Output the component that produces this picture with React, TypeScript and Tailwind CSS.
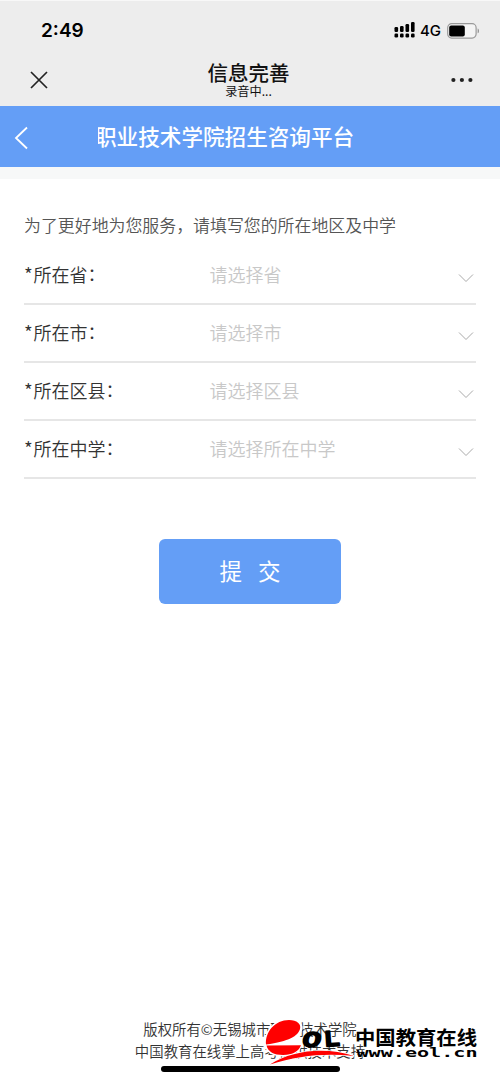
const fields = [
  { label: '所在省', placeholder: '请选择省' },
  { label: '所在市', placeholder: '请选择市' },
  { label: '所在区县', placeholder: '请选择区县' },
  { label: '所在中学', placeholder: '请选择所在中学' },
];

function StatusBar() {
  return (
    <div className="h-[60px] pl-[41px] pr-[20px] flex items-center justify-between">
      <span className="font-['Inter'] font-semibold text-[19px] leading-6 text-black">2:49</span>
      <div className="flex items-center">
        <svg className="-mt-[2px]" width="22" height="18" viewBox="0 0 22 18" fill="black">
          <rect x="0.5" y="6" width="3.6" height="5" rx="1.2" />
          <rect x="6" y="5" width="3.6" height="6" rx="1.2" />
          <rect x="11.5" y="3" width="3.6" height="8" rx="1.2" />
          <rect x="17" y="1" width="3.6" height="10" rx="1.2" />
          <rect x="0.5" y="12.600" width="3.6" height="3.8" rx="1.2" />
          <rect x="6" y="12.600" width="3.6" height="3.8" rx="1.2" />
          <rect x="11.5" y="12.600" width="3.6" height="3.8" rx="1.2" />
          <rect x="17" y="12.600" width="3.6" height="3.8" rx="1.2" />
        </svg>
        <span className="ml-[4px] w-[23px] font-['Inter'] font-medium text-[15px] leading-5 text-black">4G</span>
        <svg className="ml-[4px] -mt-[1px]" width="33" height="16" viewBox="0 0 33 16">
          <rect x="0.7" y="0.7" width="28.4" height="14.4" rx="4" fill="#f4f4f4" stroke="#999" strokeWidth="1.2" />
          <rect x="2.2" y="2.4" width="15.6" height="11" rx="2" fill="black" />
          <path d="M30.7 5.5c1.6.6 1.6 4.2 0 4.8z" fill="#888" />
        </svg>
      </div>
    </div>
  );
}

function WechatBar() {
  return (
    <div className="h-[46px] px-[29px] grid grid-cols-[40px_1fr_40px]">
      <svg className="mt-[10px] ml-[1px]" width="18" height="18" viewBox="0 0 18 18" fill="none" stroke="#222" strokeWidth="1.7">
        <path d="M1 1 17 17M17 1 1 17" />
      </svg>
      <div className="-ml-[3px] text-center text-[#111]">
        <h1 className="-mt-[1px] text-[20.5px] leading-[24px] font-medium">信息完善</h1>
        <p className="text-[12.200px] leading-[15px]">录音中...</p>
      </div>
      <svg className="mt-[16px] justify-self-end mr-[-2px]" width="22" height="6" viewBox="0 0 22 6" fill="#222">
        <circle cx="2.4" cy="3" r="2.1" />
        <circle cx="10.9" cy="3" r="2.1" />
        <circle cx="19.4" cy="3" r="2.1" />
      </svg>
    </div>
  );
}

function EolLogo() {
  return (
    <div className="absolute left-[262px] top-[1016px] flex">
      <svg width="94" height="52" viewBox="0 0 94 52">
        {/* red "e" emblem with its white halo */}
        <path d="M4 28C3 16 13 4 27 4c8 0 13 4 12 9-1 5-4 8-7 11l7 5c-3 6-9 10-17 10C12 39 5 36 4 28z" fill="white" stroke="white" strokeWidth="3" />
        <path d="M4 28.500C3 16 13 4 27 4c8 0 12.500 4 11 9C36 20 27 25.500 4 28.500z" fill="#f00" />
        <path d="M4.500 29.500 39 29.300C37 35 31 39 21 39 12 39 6 36 4.500 29.500z" fill="#f00" />
        <path d="M8 48.500C31 33.500 65 31 92 40 63 37 36 39.500 8 48.500z" fill="#f00" stroke="white" strokeWidth="1.500" paintOrder="stroke" />
        <text x="40.500" y="30.500" fontFamily="Liberation Sans" fontWeight="700" fontStyle="italic" fontSize="27" textLength="19" lengthAdjust="spacingAndGlyphs" stroke="black" strokeWidth="1.500" strokeLinejoin="round">o</text>
        <text x="63.500" y="30.500" fontFamily="Liberation Sans" fontWeight="700" fontSize="22" textLength="14.500" lengthAdjust="spacingAndGlyphs" stroke="black" strokeWidth="1.800" strokeLinejoin="round" transform="rotate(-4 63.500 30.500)">L</text>
      </svg>
      <svg width="124" height="48" viewBox="0 0 124 48" fill="black">
        <text x="0.500" y="41.300" fontFamily="DejaVu Sans Mono" fontWeight="700" fontSize="12" textLength="121" lengthAdjust="spacingAndGlyphs">www.eol.cn</text>
        <text x="-1" y="28.500" fontFamily="Noto Sans CJK SC" fontWeight="700" fontSize="19.500" textLength="122" lengthAdjust="spacingAndGlyphs" stroke="white" strokeWidth="1" paintOrder="stroke">中国教育在线</text>
      </svg>
    </div>
  );
}

export default function App() {
  return (
    <div className="relative h-[1082px] w-[500px] overflow-hidden bg-white flex flex-col font-['Noto_Sans_CJK_SC',sans-serif]">
      <header className="h-[106px] shrink-0 bg-[#ededed] border-t border-[#f8f8f8]">
        <StatusBar />
        <WechatBar />
      </header>

      <nav className="h-[61px] shrink-0 bg-[#649ef6] flex items-center">
        <svg className="ml-[14px] mt-[2px]" width="15" height="24" viewBox="0 0 15 24" fill="none" stroke="white" strokeWidth="1.8">
          <path d="M13 1.500 2 12l11 10.500" />
        </svg>
        <div className="ml-[69px] -mt-[2px] w-[280px] overflow-hidden">
          <h2 className="-ml-[3px] whitespace-nowrap text-[21.600px] leading-8 font-medium text-white">职业技术学院招生咨询平台</h2>
        </div>
      </nav>
      <div className="h-3 shrink-0 bg-[#f7f8f8]" />

      <main className="px-6 pt-[32px] grow">
        <p className="text-[16.920px] leading-[28px] font-[350] text-[#555]">为了更好地为您服务，请填写您的所在地区及中学</p>
        <form className="mt-[8px]">
          {fields.map((field) => (
            <div key={field.label} className="h-[58px] border-b-2 border-[#e6e6e6] flex items-center">
              <label className="-mt-[2px] w-[185.500px] flex text-[18px] leading-7 font-[350] text-[#333]">
                <span className="w-[9.500px] text-[19px]">*</span>
                {field.label}
                <span className="-mt-[1px]">：</span>
              </label>
              <span className="-mt-[2px] grow text-[18px] leading-7 font-[350] text-[#c8c8c8]">{field.placeholder}</span>
              <svg className="mt-[6px] mr-[2px]" width="16" height="10" viewBox="0 0 16 10" fill="none" stroke="#aaa" strokeWidth="1">
                <path d="M1 1.500 8 8.500l7-7" />
              </svg>
            </div>
          ))}
          <button type="button" className="mt-[60px] ml-[135px] w-[182px] h-[65px] pb-[1px] rounded-[6px] bg-[#649ef6] text-[22.500px] font-normal text-white flex items-center justify-center gap-4">
            <span>提</span>
            <span>交</span>
          </button>
        </form>
      </main>

      <footer className="h-[64px] shrink-0 text-center text-[14.400px] leading-[22px] font-[350] text-[#333]">
        <p>版权所有©无锡城市职业技术学院</p>
        <p>中国教育在线掌上高考提供技术支持</p>
        <div className="mt-[4px] mx-auto w-[179px] h-[6px] rounded-full bg-black" />
      </footer>
      <EolLogo />
    </div>
  );
}
